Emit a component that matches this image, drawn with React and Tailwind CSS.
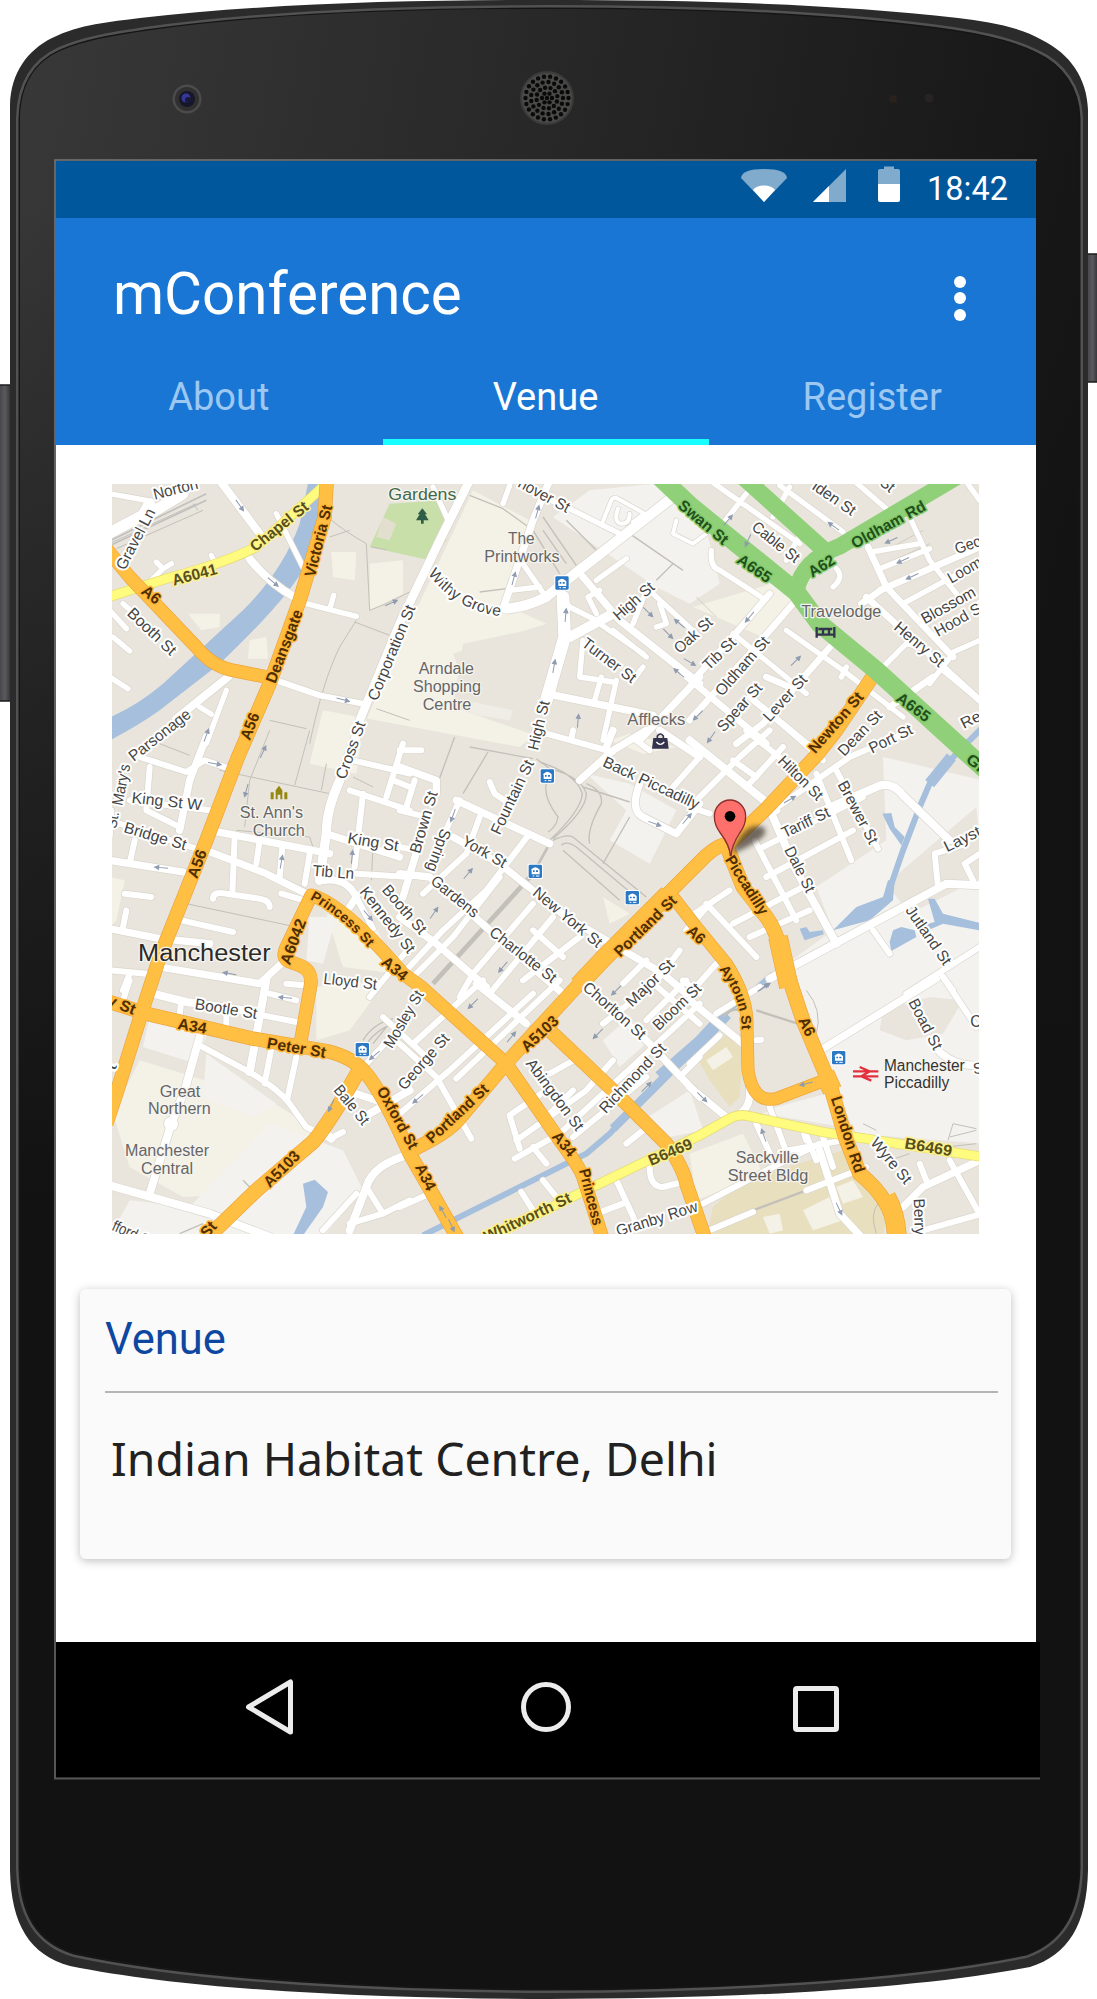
import React from 'react';

/* ---------- Map data: 3 units per pixel, split in 3x3 sheets of 870x750 ---------- */

const SHEETS = {
  A: [0, 0], B: [870, 0], C: [1740, 0],
  D: [0, 750], E: [870, 750], F: [1740, 750],
  G: [0, 1500], H: [870, 1500], I: [1740, 1500],
};

// Minor streets: [sheet, width, path]
const STREETS = [
  ['A', 16, 'M0,40 L110,60 M125,300 L160,265 L140,245 M160,265 L185,250 M305,225 L315,245 M500,100 L580,260 M590,370 L740,408 M662,380 L672,345 M40,370 L120,440 M0,390 L50,445 M10,470 L60,512 M0,590 L55,625 M350,630 L290,790 M270,680 L305,702'],
  ['A', 24, 'M330,0 L450,160 M420,235 Q480,310 555,350 M200,715 L355,590'],
  ['A', 34, 'M0,158 L100,105 L120,70 M105,110 L220,40'],
  ['A', 18, 'M500,600 L630,645 L770,672'],
  ['B', 26, 'M210,0 L130,160 L0,430 L-120,720'],
  ['B', 16, 'M100,20 L150,130 M330,15 L310,70 M430,50 L500,80 L660,160 M370,250 L435,345 M330,330 L420,320 M680,235 L590,300 M480,340 L510,380 L590,420 M640,450 L740,530 M600,330 L565,350 L590,400 M550,480 L540,590 L640,605 M605,590 L585,660 M650,600 L610,780 M760,340 L900,470 M740,330 L700,430 M780,370 L800,430 L770,440 M730,560 L700,600 M600,430 L730,520'],
  ['B', 12, 'M605,135 L635,60 Q640,48 655,55 L735,100 L700,125 M655,85 Q640,125 665,130 Q690,130 690,100 M830,120 L820,160 L880,190 L920,160'],
  ['B', 22, 'M450,0 L400,120 L310,385 M550,290 L660,420 L900,610 M440,640 L760,705 M720,780 L900,590'],
  ['B', 30, 'M820,50 L500,300 L440,350 Q380,380 320,385 M510,470 L640,400'],
  ['B', 38, 'M490,350 L495,470 L440,660'],
  ['C', 16, 'M65,210 Q60,260 90,270 L215,350 M60,0 L330,190 M170,40 L100,130 M300,20 L250,110 M330,165 L290,240 M270,15 L460,155 M480,-10 L590,85 M660,110 L720,240 L800,340 M545,215 L690,190 M570,265 L720,205 M640,370 L870,245 M780,520 L870,480 M290,450 L460,570 L640,710 M130,460 L350,640 M440,265 Q465,290 430,320 M760,570 L870,660 M455,590 L470,560 M580,560 L650,490 L690,500 M720,610 L790,520 M820,-10 L870,60'],
  ['C', 20, 'M535,200 L590,320 L790,530 M570,330 L870,200 M515,370 L580,325 M530,350 L870,660 M240,340 L120,480 L20,590 M310,370 L180,520 L0,720 M430,490 L220,730 L140,790 M-20,580 L230,790 M600,680 L730,590 M230,590 L300,620 M180,650 L350,790'],
  ['D', 18, 'M90,80 L230,125 L285,90 L350,112 M120,110 L110,240 L200,285 M60,210 L300,240 M0,270 L230,345 L290,365 M75,330 L60,400 M375,320 L368,490 M450,330 L440,400 M518,350 L510,440 M600,370 L585,460 M310,505 Q310,482 350,490 L450,505 Q480,510 480,530 M215,570 L370,605 M50,540 L40,590 M0,720 L110,730 M730,90 L900,130 M720,180 L900,240 M760,190 L735,410 M880,40 L830,200 M740,430 L900,440 M740,500 L790,595 M780,800 L900,650 M515,490 L600,515 M60,730 L40,780 M850,150 L900,170 M0,320 L5,240 M45,490 L125,500'],
  ['D', 22, 'M290,20 L240,150 L210,300 M0,390 L220,425 M300,300 L660,370 M290,360 L470,430 L590,490 M0,595 L150,625 L300,640 M150,710 L450,760 L515,700 M650,310 L870,380 M640,450 Q710,440 740,500 L720,530'],
  ['D', 28, 'M750,-10 L690,150 Q650,240 650,310 L630,450'],
  ['E', 18, 'M0,60 L65,60 M45,150 L20,230 M0,240 L60,255 M180,210 L125,330 M240,260 L200,370 L70,490 M390,310 L260,480 L130,600 L20,720 M270,155 L285,190 L330,220 M400,520 L220,730 L180,800 M540,620 L370,750 M400,600 L490,680 M460,560 L270,790 M820,170 L900,80 M710,30 L750,60 M840,660 L780,740 M670,760 L740,690 M440,10 L640,65 M520,0 L515,30 M0,350 L50,360 M300,440 L160,620 L40,740'],
  ['E', 22, 'M0,110 L110,150 L110,190 M55,350 L10,500 M170,210 L450,340 M160,320 L300,400 L500,560 L790,730 L860,790 M0,430 L90,440 L270,600 L490,790 M0,560 L110,640 L260,770 M740,0 L640,60 L540,150 M720,160 Q690,240 730,260 L830,310 L900,220 M780,0 L900,80 M640,0 L620,50'],
  ['F', 18, 'M170,0 L280,90 M20,210 L150,80 L240,0 M170,170 L280,50 M130,90 L200,140 M195,330 L320,570 M220,350 L520,200 M250,240 L480,80 L640,10 M380,130 L485,390 M230,440 L490,300 M0,560 L120,480 M50,520 L200,680 M130,580 L340,470 M180,620 L360,540 M745,470 L735,370 L830,340 M870,370 L825,400 L850,450 M550,600 L600,670 M650,790 L870,650 M760,740 L790,780 M440,120 L565,355 M300,0 L400,90 M0,230 L60,250 M0,790 L80,700 M-10,600 L60,520'],
  ['F', 24, 'M0,30 L260,240 M250,260 L320,420 L440,640 M400,240 L560,170 Q605,150 640,195 L780,330 M240,745 L770,460 L870,465'],
  ['G', 18, 'M435,100 L560,125 M215,60 L210,105 M480,40 L560,60 M270,195 L410,270 Q500,320 540,370 L590,440 L660,475 L700,455 M484,210 L465,310 M560,230 L532,360 M530,10 L580,15 M770,250 L880,130 M640,750 L740,640 M770,620 L820,700 L720,730 M820,700 L900,660 M350,90 L350,140 M40,60 L60,0 M820,110 L950,230'],
  ['G', 24, 'M130,40 L230,65 L440,95 M470,0 L420,275 M270,170 L225,330 L185,430 L120,640 M0,615 L300,700 L480,770 M910,520 Q790,550 770,620 L720,750 M650,460 L665,475 M780,400 L900,330'],
  ['G', 40, 'M183,430 L185,432'],
  ['H', 18, 'M0,190 L110,290 L215,475 M0,400 L150,270 L400,40 M40,190 L250,0 M170,295 L480,0 M0,680 L90,640 M330,405 L440,330 M330,405 L360,505 M345,535 L480,460 L740,220 L900,70 M350,480 L560,330 L640,240 M400,500 L440,550 M450,280 L540,230 M520,470 L740,290 M680,490 L730,450 M365,635 L400,690 M430,600 L470,650 M590,700 L670,670 M650,600 L710,730 M750,560 Q750,620 790,620 L850,605 M450,400 L520,330 M610,130 L700,60 M740,120 L860,0 M840,290 L900,230 M750,0 L900,130 M850,0 L900,40'],
  ['H', 22, 'M230,10 L380,130 M560,20 L740,180 L900,350 M-130,340 L-40,370'],
  ['I', 18, 'M760,-10 L860,140 M80,100 L210,20 M0,250 L90,165 M240,380 L290,515 M200,430 L250,540 M400,470 L430,560 M340,450 L350,480 M270,515 L460,480 M40,670 L230,570 L390,490 M350,630 L530,560 M0,775 L190,695 M690,550 L710,600 M780,540 L880,720 M700,750 L860,705 M200,180 L215,178 M340,440 L380,540'],
  ['I', 22, 'M400,205 L740,-5 M750,215 Q800,260 870,255 M0,60 L160,190 M0,320 L110,410 M180,320 Q185,380 150,400 M390,510 L450,700 L510,765 M640,680 L700,620 L870,540'],
];

// Thin grey paths (footways, tram and rail tracks)
const TRACKS = [
  ['A', 3, 'M0,190 L260,70 M20,205 L280,90 M660,115 Q700,150 770,190 L780,390 L830,370 L900,335 M740,420 L690,500 Q640,600 600,790 M735,425 L840,465 M250,70 L265,90 M660,170 L720,150 M480,720 L590,745 M785,200 L830,208 M800,685 L900,720'],
  ['B', 4, 'M210,45 L310,85 L400,150 L480,280 M430,110 L540,270 M430,150 L500,250 M500,120 L590,210 M690,160 L850,270 M820,250 L770,300 M240,335 L320,325'],
  ['C', 2, 'M570,220 L700,150 M590,250 L720,190 M20,350 L80,410'],
  ['D', 3, 'M480,0 L420,150 L405,290 M330,120 L660,190 M600,0 L555,165 M650,100 L635,180 M150,40 L240,75 M230,520 L560,590 M730,140 L790,170 M790,350 L785,450 M380,300 L600,320 L610,350'],
  ['E', 4, 'M410,85 L450,115 Q545,140 560,190 Q560,240 460,325 M420,95 Q530,130 548,190 Q545,240 450,330 M440,160 Q430,200 475,260 Q470,290 445,305 M550,170 L690,215 M560,160 Q610,180 605,220 Q560,300 570,340 M690,260 L610,400 M460,330 Q500,310 520,320 L740,500 M485,345 Q500,330 530,350 L720,510 M490,360 L660,510 M165,20 L110,170 M265,65 L190,190 M210,50 L400,85'],
  ['E', 14, 'M100,760 L400,430'],
  ['E', 8, 'M400,430 L450,340'],
  ['I', 7, 'M190,690 L350,630 M200,90 L340,135 M100,110 Q120,80 160,90'],
  ['I', 3, 'M350,30 Q400,90 380,160 M780,470 L860,450 M790,430 L860,445 M790,430 L775,480 M770,500 L860,490 M560,760 Q540,700 565,670 M520,430 L560,450 M600,540 L660,520'],
  ['G', 4, 'M760,180 Q790,130 850,115 M775,185 Q800,150 850,130 M790,190 L830,140 M210,760 L280,730 M400,600 L440,640'],
];

// One-way arrows: [sheet, x, y, angle]
const ARROWS = [
  ['A', 390, 75, 55], ['A', 490, 305, 40], ['A', 700, 658, 15], ['A', 290, 765, -70], ['A', 845, 368, -25],
  ['B', 413, 95, -75], ['B', 342, 295, -75], ['B', 498, 405, -85], ['B', 463, 558, -80], ['B', 535, 722, -85], ['B', 745, 395, 45], ['B', 805, 460, 45], ['B', 840, 430, 220], ['B', 870, 545, 30], ['B', 838, 578, 220],
  ['C', 115, 120, -50], ['C', 175, 180, 115], ['C', 432, 138, 215], ['C', 605, 180, 155], ['C', 640, 240, 155], ['C', 668, 288, 155], ['C', 180, 410, 130], ['C', 318, 542, -45], ['C', 25, 705, 135],
  ['D', 460, 65, -65], ['D', 410, 180, 105], ['D', 315, 100, 10], ['D', 155, 412, 185], ['D', 515, 395, -80], ['D', 727, 380, -85], ['D', 360, 730, 190], ['D', 775, 555, 50],
  ['E', 160, 255, 110], ['E', 205, 430, -50], ['E', 103, 548, -55], ['E', 765, 280, 20], ['E', 862, 265, -50], ['E', 310, 710, 130],
  ['F', 300, 208, -30], ['F', 65, 20, 125], ['F', 225, 770, -35],
  ['G', 527, 52, 185], ['G', 795, 225, 140], ['G', 665, 375, 115],
  ['H', 220, 70, 135], ['H', 335, 170, -50], ['H', 55, 355, 140], ['H', 595, 160, 135], ['H', 740, 320, -45], ['H', 130, 695, 240], ['H', 155, 735, 65], ['H', 650, 30, 135],
  ['I', 220, 22, -35], ['I', 37, 350, 45], ['I', 222, 465, 250], ['I', 350, 310, 165], ['I', 448, 685, 65],
];

// Labels along a baseline: [sheet, kind, text, x1, y1, (cx, cy,) x2, y2]
const LABELS = [
  ['A', 'n', 'Norton', 135, 58, 268, 24], ['A', 'n', 'Gravel Ln', 45, 272, 138, 95],
  ['A', 'y', 'A6041', 192, 316, 325, 280], ['A', 'y', 'Chapel St', 437, 216, 600, 85],
  ['A', 'o', 'Victoria St', 615, 292, 668, 78], ['A', 'o', 'A6', 92, 337, 138, 374],
  ['A', 'n', 'Booth St', 50, 402, 182, 528], ['A', 'o', 'Deansgate', 497, 612, 580, 395],
  ['A', 'o', 'A56', 420, 782, 450, 705], ['A', 'n', 'Corporation St', 802, 664, 918, 382],
  ['D', 'n', 'Parsonage', 72, 95, 247, -42], ['D', 'n', "Mary's", 38, 228, 62, 105], ['D', 'n', 'St.', 20, 296, 28, 246],
  ['B', 'n', 'nover St', 352, 18, 500, 98], ['B', 'n', 'Withy Grove', 85, 280, 170, 395, 318, 410],
  ['B', 'n', 'High St', 657, 423, 768, 325], ['B', 'n', 'Oak St', 840, 522, 942, 430],
  ['B', 'n', 'Turner St', 543, 495, 695, 610], ['B', 'g', 'Swan St', 832, 80, 970, 196],
  ['E', 'n', 'High St', 415, 62, 450, -85],
  ['C', 'n', 'lden St', 365, 25, 485, 108], ['C', 'n', 'St', 568, 12, 600, 38], ['C', 'n', 'Cable St', 183, 145, 315, 250],
  ['C', 'g', 'Oldham Rd', 495, 206, 712, 87], ['C', 'g', 'A62', 368, 292, 440, 248], ['C', 'g', 'A665', 138, 245, 232, 310],
  ['C', 'n', 'Geor', 802, 222, 892, 190], ['C', 'n', 'Loom', 785, 310, 880, 255], ['C', 'n', 'Blossom', 705, 432, 862, 345],
  ['C', 'n', 'Hood St', 745, 470, 890, 388], ['C', 'n', 'Henry St', 610, 445, 748, 562],
  ['C', 'n', 'Tib St', 57, 572, 142, 490], ['C', 'n', 'Oldham St', 97, 650, 242, 485], ['C', 'n', 'Spear St', 102, 757, 220, 625],
  ['C', 'n', 'Lever St', 240, 727, 355, 600], ['C', 'o', 'Newton St', 377, 822, 524, 652], ['C', 'g', 'A665', 616, 660, 708, 727],
  ['C', 'n', 'Re', 822, 746, 878, 718], ['C', 'n', 'Dean St', 464, 830, 580, 708], ['F', 'n', 'Port St', 547, 70, 672, 8],
  ['D', 'n', 'King St W', 65, 217, 275, 240], ['D', 'n', 'Bridge St', 40, 305, 225, 360], ['D', 'n', 'Cross St', 707, 150, 768, -20],
  ['D', 'n', 'King St', 712, 338, 864, 363], ['D', 'n', 'Tib Ln', 608, 436, 732, 446], ['D', 'n', 'Kennedy St', 748, 485, 895, 672],
  ['D', 'n', 'Booth St', 815, 480, 930, 615], ['D', 'o', 'A56', 262, 447, 292, 365], ['D', 'o', 'Princess St', 600, 506, 700, 560, 782, 660],
  ['D', 'o', 'A34', 812, 700, 878, 754], ['D', 'o', 'A6042', 540, 707, 590, 573], ['D', 'n', 'Lloyd St', 640, 760, 800, 778],
  ['E', 'n', 'Brown St', 60, 372, 114, 188], ['E', 'n', 'Spring', 125, 292, 80, 418], ['E', 'n', 'Fountain St', 300, 316, 404, 98],
  ['E', 'n', 'York St', 183, 342, 310, 414], ['E', 'n', 'Gardens', 90, 457, 222, 564], ['E', 'n', 'New York St', 396, 492, 592, 654],
  ['E', 'n', 'Charlotte St', 266, 612, 456, 760], ['E', 'o', 'Portland St', 662, 682, 834, 514], ['E', 'o', 'A6', 858, 606, 900, 644],
  ['E', 'n', 'Back Piccadilly', 606, 106, 890, 238], ['E', 'n', 'Major St', 697, 832, 827, 706],
  ['H', 'n', 'Bloom St', 777, 153, 908, 28], ['H', 'n', 'Chorlton St', 546, 25, 722, 180],
  ['F', 'n', 'Hilton St', 262, 95, 382, 213], ['F', 'n', 'Brewer St', 443, 162, 540, 345], ['F', 'n', 'Tariff St', 285, 324, 424, 257],
  ['F', 'n', 'Dale St', 283, 358, 350, 490], ['F', 'o', 'Piccadilly', 105, 388, 212, 557], ['F', 'n', 'Layst', 772, 366, 877, 314],
  ['F', 'n', 'Jutland St', 646, 540, 762, 708], ['F', 'g', 'Gr', 826, 92, 872, 130], ['F', 'o', 'Aytoun St', 88, 717, 152, 800, 156, 888],
  ['G', 'o', 'y St', -10, 72, 70, 104], ['G', 'n', 'Bootle St', 254, 86, 440, 116], ['G', 'o', 'A34', 202, 145, 288, 160],
  ['G', 'o', 'Peter St', 470, 203, 646, 233], ['G', 'n', 'Bale St', 670, 330, 758, 437], ['G', 'n', 'Mosley St', 847, 207, 944, 42],
  ['G', 'o', 'A5103', 480, 624, 574, 530], ['G', 'o', 'Oxford St', 800, 330, 900, 510], ['G', 'n', 'fford St', 4, 748, 120, 800], ['G', 'o', 'St', 292, 775, 324, 740],
  ['G', 'n', 't', 16, 272, 22, 256],
  ['H', 'n', 'George St', 15, 332, 152, 176], ['H', 'o', 'Portland St', 97, 492, 270, 330], ['H', 'o', 'A5103', 382, 217, 480, 126],
  ['H', 'n', 'Abingdon St', 377, 250, 530, 455], ['H', 'n', 'Richmond St', 618, 402, 802, 206], ['H', 'o', 'A34', 455, 470, 508, 532],
  ['H', 'o', 'A34', 45, 560, 82, 634], ['H', 'o', 'Princess', 538, 570, 580, 738], ['H', 'y', 'B6469', 754, 557, 882, 502],
  ['H', 'y', 'Whitworth St', 262, 786, 518, 664], ['H', 'n', 'Granby Row', 655, 768, 897, 692],
  ['I', 'o', 'A6', 325, 120, 350, 172], ['I', 'o', 'London Rd', 423, 354, 496, 580], ['I', 'n', 'Boad St', 655, 65, 732, 212],
  ['I', 'y', 'B6469', 643, 504, 784, 528], ['I', 'n', 'Wyre St', 540, 488, 645, 614], ['I', 'n', 'Berry', 672, 655, 676, 765],
  ['I', 'n', 'C', 842, 140, 876, 140], ['I', 'n', 'S', 852, 282, 882, 278],
];

// Place names: [sheet, text, x, y, size, anchor, colour, width]
const PLACES = [
  ['B', 'Gardens', 68, 60, 48, 'middle', '#41684a', 204], ['B', 'The', 365, 190, 48, 'middle', '#666', 80], ['B', 'Printworks', 367, 245, 48, 'middle', '#666', 226],
  ['B', 'Arndale', 140, 580, 48, 'middle', '#666', 166], ['B', 'Shopping', 142, 636, 48, 'middle', '#666', 204], ['B', 'Centre', 142, 690, 48, 'middle', '#666', 146],
  ['B', 'Afflecks', 770, 735, 48, 'middle', '#666', 174], ['C', 'Travelodge', 455, 410, 48, 'middle', '#666', 240],
  ['D', "St. Ann's", 485, 262, 48, 'middle', '#666', 190], ['D', 'Church', 507, 318, 48, 'middle', '#666', 156],
  ['D', 'Manchester', 284, 693, 74, 'middle', '#2b2b2b', 398],
  ['G', 'Great', 211, 350, 48, 'middle', '#666', 122], ['G', 'Northern', 209, 402, 48, 'middle', '#666', 188],
  ['G', 'Manchester', 172, 528, 48, 'middle', '#666', 252], ['G', 'Central', 172, 582, 48, 'middle', '#666', 156],
  ['I', 'Manchester', 583, 273, 48, 'start', '#333', 242], ['I', 'Piccadilly', 583, 322, 48, 'start', '#333', 196],
  ['I', 'Sackville', 233, 548, 48, 'middle', '#666', 190], ['I', 'Street Bldg', 235, 602, 48, 'middle', '#666', 242],
];

// Label styles: text colour, halo colour, halo width, weight
const KIND = {
  n: ['#454545', '#ffffff', 12, 400],
  o: ['#4d2e00', '#ffb63a', 9, 700],
  y: ['#57501c', '#fdf28a', 9, 700],
  g: ['#1f4f1c', '#86cc6c', 9, 700],
};

const ORANGE = [
  [40, 'M652,-10 L645,110 L570,360 L480,610 L385,830 L290,1080 L150,1430 L95,1600 L20,1840 L-10,1930'],
  [38, 'M-10,205 L60,290 L260,500 Q310,562 380,572 L480,592'],
  [38, 'M572,1690 L602,1520 Q612,1470 570,1455 L535,1442 Q515,1430 530,1400 L605,1245 Q700,1270 880,1480 L935,1520 L1190,1750 L1350,1980 Q1410,2060 1420,2090 L1478,2270'],
  [40, 'M-10,1562 L110,1600 L430,1675 L650,1712 Q730,1730 770,1780 Q820,1840 900,2020 L1045,2275'],
  [42, 'M745,1775 L690,1870 Q640,1950 610,1985 L440,2130 L300,2265'],
  [40, 'M915,2005 Q1010,1960 1045,1920 L1190,1748 L1400,1520 L1680,1235 L1790,1125 Q1830,1090 1860,1090 L1970,985 L2125,820 L2180,750 L2288,590'],
  [52, 'M1405,1515 L1480,1435 L1675,1240'],
  [40, 'M1325,1655 L1510,1830 L1670,1990 Q1720,2060 1730,2110 L1785,2270'],
  [42, 'M1850,1095 L1900,1220 L1970,1310 Q2000,1350 2015,1420 L2050,1530 L2080,1620 L2160,1810 L2210,1980 L2250,2080 Q2350,2160 2362,2270'],
  [56, 'M2005,1370 L2038,1520 M2145,1780 L2168,1830 M2330,2150 Q2358,2200 2362,2270'],
  [36, 'M1690,1250 L1760,1340 L1850,1450 Q1915,1550 1912,1640 L1915,1770 Q1930,1870 2000,1855 L2150,1798'],
];

const YELLOW = 'M-10,352 L180,292 Q340,250 440,200 L645,15 M1120,2280 L1490,2100 L1770,1965 L1865,1912 Q1890,1900 1920,1908 L2140,1955 L2620,2030';

const stations = [[1357, 308], [1313, 887], [1277, 1173], [1568, 1252], [758, 1708], [2187, 1732]];

function Sheet({ id, children }) {
  const [x, y] = SHEETS[id];
  return <g transform={`translate(${x} ${y})`}>{children}</g>;
}

function RoadLabel({ item, id }) {
  const [sheet, kind, text, ...p] = item;
  const [fill, halo, haloWidth, fontWeight] = KIND[kind];
  const style = {
    fill, stroke: halo, strokeWidth: haloWidth, strokeLinejoin: 'round', paintOrder: 'stroke', fontWeight, fontSize: 47,
  };
  if (p.length === 6) {
    const [x1, y1, cx, cy, x2, y2] = p;
    if (fontWeight === 700) style.fontSize = 42;
    return (
      <Sheet id={sheet}>
        <path id={id} d={`M${x1},${y1} Q${cx},${cy} ${x2},${y2} l${(x2 - cx) / 4},${(y2 - cy) / 4}`} fill="none" />
        <text style={style}><textPath href={`#${id}`}>{text}</textPath></text>
      </Sheet>
    );
  }
  const [x1, y1, x2, y2] = p;
  const length = Math.hypot(x2 - x1, y2 - y1);
  const angle = (Math.atan2(y2 - y1, x2 - x1) * 180) / Math.PI;
  return (
    <Sheet id={sheet}>
      <text style={style} transform={`translate(${x1} ${y1}) rotate(${angle})`} textLength={length} lengthAdjust="spacingAndGlyphs">{text}</text>
    </Sheet>
  );
}

function VenueMap() {
  return (
    <svg className="block h-[750px] w-[867px] font-['Liberation_Sans',sans-serif]" viewBox="7 11 2601 2250" role="img" aria-label="Map of Manchester">
      <rect x="0" y="0" width="2620" height="2270" fill="#e9e5dc" />

      {/* Built-up blocks */}
      <g fill="#f4f2e6">
        <path d="M1090,30 L1260,120 L1200,380 L1310,430 L1030,520 L1060,600 L1290,750 L1230,800 L640,690 L600,850 L740,880 L760,740 L900,430Z" />
        <path d="M780,250 L880,240 L880,340 L780,390Z M665,215 L740,215 L735,300 L670,290Z M420,480 L470,470 L475,535 L415,535Z M235,400 L330,400 L330,440 L275,450Z" />
        <path d="M0,1190 L45,1200 L20,1320 L0,1340Z M90,1740 L480,1860 L620,1950 L420,2140 L220,2150 L60,2060 L10,1900Z M620,1520 L830,1500 L720,1650 L620,1680Z M490,2140 L540,2110 L620,2200 L500,2230Z M650,1300 L800,1340 L860,1480 L700,1460Z" />
        <path d="M1740,2020 L1900,1960 L1960,2080 L1760,2160Z M2020,300 L2050,360 L1960,470 L1750,380Z M1500,780 L1560,760 L1700,800 L1600,820Z M1480,1250 L1560,1300 L1500,1330Z" />
      </g>
      <path d="M1060,490 L1350,430 L1340,560 L1290,770 L1030,680Z" fill="#e9e5dc" />
      <path d="M1090,665 L1210,690 L1200,720 L1080,700Z" fill="#f0ede6" />
      <g fill="#f3f2ef">
        <path d="M1440,30 L1640,10 L1790,150 L1830,310 L1740,370 L1640,320 L1330,110Z M1430,880 L1550,990 L1500,1080 L1620,1150 L1700,990 L1560,910Z" />
        <path d="M2320,830 L2620,900 L2620,1990 L2240,1960 L2160,1800 L2060,1560 L1990,1480 L2170,1350 L2120,1220 L2330,1080Z M2000,1880 L2150,1840 L2200,1940 L1960,1900Z" />
        <path d="M600,1310 L680,1310 L640,1450 L590,1440Z M480,1930 L700,2010 L760,2130 L640,2270 L0,2270 L60,2160 L240,2180Z M120,1610 L300,1640 L260,1750 L100,1700Z M290,1720 L500,1870 L430,1910 L280,1850Z M1480,1680 L1560,1610 L1620,1680 L1530,1760Z M1600,1920 L1740,1830 L1780,1950 L1680,1970Z" />
      </g>
      <path d="M840,70 L1000,60 L1010,180 L960,240 L780,200Z" fill="#c8dfaa" />
      <path d="M820,110 L860,130 L840,180 L800,170Z" fill="#e2dfcf" />
      <g fill="#e8dfbf">
        <path d="M1900,2100 L2200,2010 L2330,2200 L2320,2270 L1790,2270 L1810,2180Z M1760,1730 L1850,1660 L1900,1710 L1890,1850 L1860,1880 L1800,1800Z" />
      </g>
      <g fill="#f4f2e6">
        <path d="M2080,2190 L2160,2150 L2200,2220 L2110,2250Z M1960,2210 L2010,2200 L2020,2250 L1980,2260Z M2180,2120 L2230,2100 L2260,2150 L2200,2170Z M1790,1740 L1850,1700 L1870,1730 L1810,1770Z" />
      </g>
      <g fill="#e9e5dc">
        <path d="M2320,1590 L2460,1550 L2560,1560 L2500,1660 L2390,1680 L2310,1650Z M2330,1210 L2600,980 L2620,1190 L2400,1300Z M2300,1990 L2500,2020 L2480,2080 L2400,2100Z M2420,750 L2500,770 L2460,820Z M1980,1330 L2100,1360 L2060,1420 L2000,1430Z M1960,1600 L2060,1640 L2130,1780 L1960,1830Z" />
      </g>

      {/* Water */}
      <g fill="#a5bfdd">
        <path d="M597,0 L655,0 L590,250 Q540,350 330,550 L150,690 Q80,740 0,780 L0,712 Q90,670 160,610 L400,390 Q520,270 570,130Z" />
        <path d="M2170,1350 L2240,1280 L2320,1250 L2335,1200 L2355,1200 L2350,1260 L2280,1320Z" />
        <path d="M2070,1345 L2090,1340 L2100,1355 L2140,1350 L2142,1362 L2085,1380Z M2340,1385 L2350,1350 L2375,1340 L2415,1350 L2420,1370 L2345,1412Z M2455,1255 L2475,1255 L2500,1300 L2620,1330 L2620,1352 L2500,1330 L2455,1350 L2440,1335 L2475,1325Z" />
        <path d="M2318,1000 L2345,998 L2355,1040 L2385,1070 L2375,1095 L2340,1045Z M580,2110 L615,2098 L655,2135 L640,2180 L580,2265 L550,2265 L590,2180Z" />
      </g>
      <g fill="none" stroke="#a5bfdd" strokeLinejoin="round">
        <path d="M2620,740 L2540,820 L2460,910 L2430,980 L2380,1110 L2335,1240" strokeWidth="18" />
        <path d="M2525,830 L2460,910" strokeWidth="34" />
        <path d="M940,2265 L1070,2200 L1220,2125 L1430,2020 L1500,1960 L1610,1840" strokeWidth="18" />
        <path d="M1510,1945 L1610,1845 L1770,1685" strokeWidth="26" />
        <path d="M1650,1790 L1770,1685 L1850,1600" strokeWidth="38" />
        <path d="M1840,1605 L1990,1480" strokeWidth="14" />
      </g>

      {/* Streets */}
      {TRACKS.map(([id, w, d], i) => (
        <Sheet key={i} id={id}><path d={d} fill="none" stroke="#c3c0ba" strokeWidth={w} /></Sheet>
      ))}
      {STREETS.map(([id, w, d], i) => (
        <Sheet key={i} id={id}><path d={d} fill="none" stroke="#dad6cd" strokeWidth={w + 4} strokeLinecap="round" strokeLinejoin="round" /></Sheet>
      ))}
      {STREETS.map(([id, w, d], i) => (
        <Sheet key={i} id={id}><path d={d} fill="none" stroke="#fff" strokeWidth={w} strokeLinecap="round" strokeLinejoin="round" /></Sheet>
      ))}
      <g fill="none" stroke="#c0c0c0" strokeWidth="5">
        <path d="M0,182 L290,40 M0,196 L290,60" />
      </g>
      <path d={YELLOW} fill="none" stroke="#e6dc78" strokeWidth="31" />
      <path d={YELLOW} fill="none" stroke="#fffb7e" strokeWidth="26" />
      <g fill="none" strokeLinejoin="round">
        {ORANGE.map(([w, d]) => <path key={d} d={d} stroke="#eda53a" strokeWidth={w + 3} />)}
        {ORANGE.map(([w, d]) => <path key={d} d={d} stroke="#ffbf43" strokeWidth={w - 1} />)}
      </g>
      <g fill="none" stroke="#8fd079" strokeLinejoin="round">
        <path d="M1900,-10 L2150,215 M2060,330 Q2080,240 2190,198 L2540,-10" strokeWidth="50" />
        <path d="M1640,-20 L1740,75 L1900,205 L2060,335 L2130,430 L2300,570 L2525,775 L2640,880" strokeWidth="56" />
      </g>

      {ARROWS.map(([id, x, y, a], i) => (
        <Sheet key={i} id={id}>
          <path transform={`translate(${x} ${y}) rotate(${a})`} d="M-20,0 L10,0 M8,-6 L20,0 L8,6Z" fill="#8f9bb0" stroke="#8f9bb0" strokeWidth="3" />
        </Sheet>
      ))}

      {/* Labels */}
      {LABELS.map((item, i) => <RoadLabel key={i} item={item} id={`street-${i}`} />)}
      {PLACES.map(([id, text, x, y, size, anchor, fill, width], i) => (
        <Sheet key={i} id={id}>
          <text x={x} y={y} fontSize={size} textAnchor={anchor} fill={fill} textLength={width} lengthAdjust="spacingAndGlyphs" stroke="#f6f4ee" strokeWidth="8" strokeLinejoin="round" paintOrder="stroke">{text}</text>
        </Sheet>
      ))}

      {/* Points of interest */}
      {stations.map(([x, y]) => (
        <g key={x} transform={`translate(${x} ${y})`}>
          <rect x="-23" y="-23" width="46" height="46" rx="5" fill="#fff" />
          <rect x="-20" y="-20" width="40" height="40" rx="4" fill="#2b78c5" />
          <path d="M-13,-5 Q0,-20 13,-5 L13,9 L-11,9 L-11,-3Z" fill="#fff" />
          <path d="M-7,-3 H-2 V2 H-7Z M2,-3 H8 V2 H2Z" fill="#2b78c5" />
          <path d="M-8,14 H-3 M2,14 H12" stroke="#fff" strokeWidth="3" />
        </g>
      ))}
      <path d="M938,84 L952,102 L946,102 L957,120 L942,120 L942,130 L934,130 L934,120 L919,120 L930,102 L924,102Z" fill="#2f5d48" />
      <path d="M483,957 V936 H492 V957Z M524,957 V936 H533 V957Z M498,957 V930 L508,916 L518,930 V957 H512 V943 H504 V957Z" fill="#948811" />
      <g transform="translate(1652 785)">
        <path d="M-9,-10 V-18 Q0,-30 9,-18 V-10" fill="none" stroke="#36364f" strokeWidth="5" />
        <path d="M-21,-12 H21 L25,20 H-25Z" fill="#33334d" />
        <path d="M-12,0 Q0,14 12,0" fill="none" stroke="#fff" strokeWidth="4" />
      </g>
      <path d="M2121,440 V472 M2174,440 V472 M2121,463 H2174 M2126,446 H2168 M2140,446 V463 M2158,446 V463" fill="none" stroke="#33334d" strokeWidth="7" />
      <g fill="none" stroke="#e2303c" strokeWidth="7">
        <path d="M2230,1773 H2306 M2230,1788 H2306 M2250,1760 L2280,1773 L2255,1788 L2285,1801" />
      </g>

      {/* Marker */}
      <defs>
        <filter id="soft" x="-30%" y="-30%" width="160%" height="160%"><feGaussianBlur stdDeviation="8" /></filter>
      </defs>
      <path d="M1866,1122 Q1890,1050 1930,1038 Q1975,1032 1965,1062 Q1950,1085 1866,1122Z" fill="#30281c" opacity="0.65" filter="url(#soft)" />
      <path d="M1862,1126 Q1860,1095 1832,1058 Q1814,1035 1814,1008 A46,48 0 0 1 1908,1008 Q1908,1035 1890,1058 Q1866,1095 1864,1126Z" fill="#fd706b" stroke="#8a2f2c" strokeWidth="4" />
      <circle cx="1861" cy="1008" r="16" fill="#000" />
    </svg>
  );
}

/* ---------- Device ---------- */

const BODY = 'M10,105 C11,72 28,50 52,38 C80,24 110,22 140,18 C260,4 400,0 549,0 C698,0 838,4 958,18 C988,22 1018,26 1042,40 C1070,54 1087,78 1088,110 L1088,1870 C1087,1925 1068,1955 1030,1967 C900,1992 700,1999 549,1999 C398,1999 198,1992 70,1966 C30,1955 11,1925 10,1870Z';
const GLASS = 'M20,118 C21,82 36,62 60,51 C85,40 112,36 145,31 C265,14 400,9 549,9 C698,9 833,14 953,31 C986,36 1013,42 1035,53 C1062,65 1078,88 1079,118 L1079,1868 C1078,1915 1060,1942 1026,1954 C900,1980 700,1989 549,1989 C398,1989 198,1980 74,1953 C38,1942 21,1915 20,1868Z';

const HOLES = [[0, 1, 0], [5, 6, 0], [10.5, 12, 15], [16, 17, 0], [21.5, 22, 8]].flatMap(([r, n, off], ring) =>
  Array.from({ length: n }, (_, i) => {
    const a = (i / n) * Math.PI * 2 + off;
    return { key: `${ring}-${i}`, cx: 547 + r * Math.cos(a), cy: 98 + r * Math.sin(a) };
  }),
);

function Device() {
  return (
    <svg className="absolute inset-0 h-[1999px] w-[1097px]" viewBox="0 0 1097 1999" aria-hidden="true">
      <defs>
        <linearGradient id="glass" x1="0" y1="0" x2="1" y2="0.35">
          <stop offset="0" stopColor="#383838" />
          <stop offset="0.45" stopColor="#282828" />
          <stop offset="1" stopColor="#131313" />
        </linearGradient>
        <linearGradient id="fade" x1="0" y1="0" x2="0" y2="1">
          <stop offset="0.1" stopColor="#121212" stopOpacity="0" />
          <stop offset="0.6" stopColor="#121212" stopOpacity="1" />
        </linearGradient>
        <linearGradient id="key" x1="0" y1="0" x2="1" y2="0">
          <stop offset="0" stopColor="#3a3a3c" />
          <stop offset="0.5" stopColor="#5a5a5e" />
          <stop offset="1" stopColor="#1c1c1c" />
        </linearGradient>
      </defs>
      <rect x="-4" y="385" width="18" height="316" rx="4" fill="url(#key)" stroke="#1d1d1d" strokeWidth="1.5" />
      <rect x="1084" y="254" width="17" height="128" rx="4" fill="url(#key)" stroke="#1d1d1d" strokeWidth="1.5" />
      <path d={BODY} fill="#2b2b2b" />
      <path d={GLASS} fill="none" stroke="#525252" strokeWidth="8" />
      <path d={GLASS} fill="none" stroke="#151515" strokeWidth="3" />
      <path d={GLASS} fill="url(#glass)" />
      <path d={GLASS} fill="url(#fade)" />
      <circle cx="187" cy="99" r="14.5" fill="#4b4b4b" />
      <circle cx="187" cy="99" r="12" fill="#303031" />
      <circle cx="187" cy="99" r="8" fill="#17172a" />
      <circle cx="186" cy="98" r="4.5" fill="#37379a" />
      <circle cx="188" cy="100" r="3" fill="#191938" />
      <circle cx="547" cy="98" r="27" fill="#3b3b3b" />
      <circle cx="547" cy="98" r="25" fill="#4a4a49" />
      {HOLES.map((h) => <circle key={h.key} cx={h.cx} cy={h.cy} r="2.2" fill="#0a0a0a" />)}
      <circle cx="893" cy="99" r="4" fill="#2a211d" />
      <circle cx="929" cy="98" r="4.5" fill="#272323" />
      <path d="M55,1640 V160 H1037" fill="none" stroke="#777" strokeWidth="1.5" />
      <path d="M55,1640 V1778.5 H1040" fill="none" stroke="#555" strokeWidth="2" />
    </svg>
  );
}

function StatusBar() {
  return (
    <div className="flex h-[57px] items-start justify-end bg-[#01579b] pr-[28px] text-white">
      <svg className="mt-[5px] h-[38px] w-[160px]" viewBox="740 166 160 38" aria-hidden="true">
        <path d="M764,202 L741,178 Q742,169 764,169 Q786,169 787,178Z" fill="#80abcd" />
        <path d="M764,202 L753,190 Q756,185.500 764,185.500 Q772,185.500 775,190Z" fill="#fff" />
        <path d="M813,202 L846,169 V202Z" fill="#80abcd" />
        <path d="M813,202 L829,186 V202Z" fill="#fff" />
        <path d="M878,185 V171 Q878,169 880,169 H884 V166.500 H894 V169 H898 Q900,169 900,171 V185Z" fill="#80abcd" />
        <path d="M878,184 H900 V200 Q900,202 898,202 H880 Q878,202 878,200Z" fill="#fff" />
      </svg>
      <span className="ml-[27px] mt-[8px] text-[32.500px] leading-[40px]">18:42</span>
    </div>
  );
}

const TABS = [{ name: 'About' }, { name: 'Venue', active: true }, { name: 'Register' }];

function AppBar() {
  return (
    <header className="flex h-[227px] flex-col bg-[#1976d4] text-white">
      <div className="flex h-[152px] items-center justify-between pl-[57px] pr-[70px]">
        <h1 className="text-[58.300px] leading-[68px]">mConference</h1>
        <button type="button" aria-label="More options" className="mt-[8px] flex flex-col gap-[4.500px]">
          <span className="size-[12px] rounded-full bg-white" />
          <span className="size-[12px] rounded-full bg-white" />
          <span className="size-[12px] rounded-full bg-white" />
        </button>
      </div>
      <nav className="grid h-[75px] grid-cols-3">
        {TABS.map(({ name, active }) => (
          <button
            key={name}
            type="button"
            className={active
              ? 'border-b-[6px] border-[#18ffff] pt-[4px] text-center text-[38px] leading-[46px] text-white'
              : 'border-b-[6px] border-transparent pt-[4px] text-center text-[38px] leading-[46px] text-[#9cc8f1]'}
          >
            <span className="block h-[65px] pr-px">{name}</span>
          </button>
        ))}
      </nav>
    </header>
  );
}

function NavigationBar() {
  return (
    <footer className="flex h-[135px] w-[984px] items-center bg-black pb-[5px] pl-[188px]">
      <svg className="h-[58px] w-[50px]" viewBox="245 1678 50 58" fill="none" stroke="#ececec" strokeWidth="5" strokeLinejoin="round" aria-hidden="true">
        <path d="M291.500,1682 V1732 L249.500,1707Z" />
      </svg>
      <span className="ml-[227px] size-[50px] rounded-full border-[5px] border-[#ececec]" />
      <span className="ml-[222px] mt-[3px] size-[46px] rounded-[4px] border-[5px] border-[#ececec]" />
    </footer>
  );
}

export default function App() {
  return (
    <div className="relative h-[1999px] w-[1097px] overflow-hidden bg-white font-['Roboto',sans-serif]">
      <Device />
      <div className="relative ml-[56px] flex w-[980px] flex-col pt-[161px]">
        <StatusBar />
        <AppBar />
        <main className="flex h-[1197px] flex-col bg-white pt-[39px]">
          <div className="ml-[56px]"><VenueMap /></div>
          <section className="ml-[24px] mt-[55px] h-[270px] w-[931px] rounded-[6px] bg-[#fafafa] pl-[25px] pr-[13px] shadow-[0_2px_10px_rgba(0,0,0,0.26)]">
            <h2 className="flex h-[104px] items-center border-b-2 border-[#b5b5b5] text-[43.500px] text-[#0d47a1]">Venue</h2>
            <p className="ml-[6px] pt-[33px] font-['Noto_Sans',sans-serif] text-[46.400px] leading-[64px] text-[#212121]">Indian Habitat Centre, Delhi</p>
          </section>
        </main>
        <NavigationBar />
      </div>
    </div>
  );
}
